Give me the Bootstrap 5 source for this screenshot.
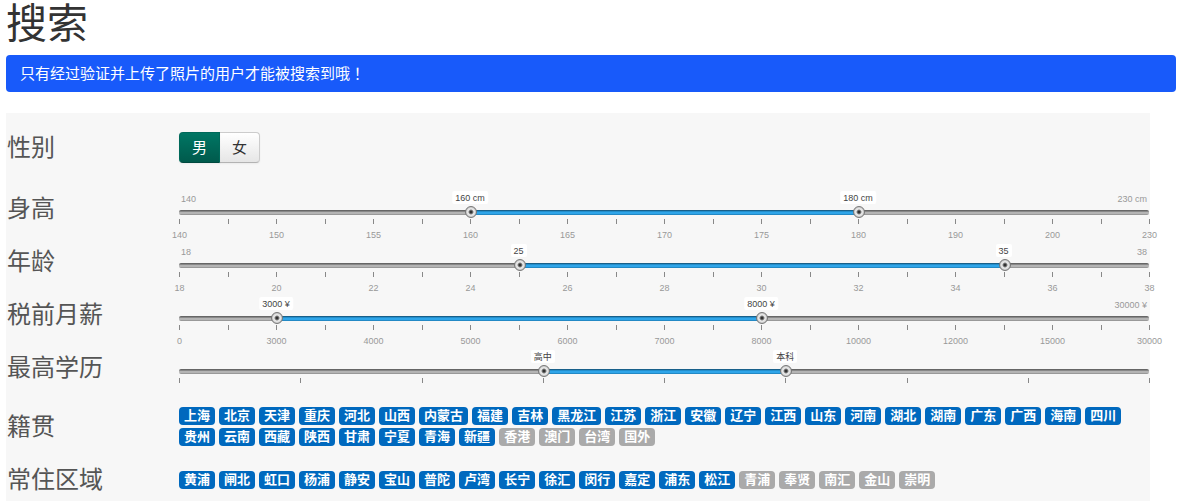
<!DOCTYPE html>
<html lang="zh-CN">
<head>
<meta charset="utf-8">
<meta name="viewport" content="width=device-width, initial-scale=1">
<title>搜索</title>
<link rel="stylesheet" href="https://cdn.jsdelivr.net/npm/bootstrap@5.3.0/dist/css/bootstrap.min.css">
<style>
body { font-family: "Liberation Sans", "Noto Sans CJK SC", sans-serif; font-size: 15px; color: #333; }
.page { padding: 0 7px 0 6px; }
.page-title { font-size: 41px; line-height: 48px; margin-bottom: 7px; }
.notice { background: #185afa; padding: 8px 14px; line-height: 21px; border-radius: 4px; margin-bottom: 21px; }
.notice-end { font-family: "Noto Sans CJK TC", sans-serif; line-height: 1; }
.panel { background: #f7f7f7; margin-right: 26px; padding-top: 17px; }
.filter-name { flex: 0 0 173px; font-size: 24px; line-height: 36px; color: #555; padding-left: 1px; }
.sex-row { margin-bottom: 25px; }
.sex { margin-top: 2px; }
.sex .btn { font-size: 15px; line-height: 21px; padding: 4px 12px; border-radius: 4px; color: #333; border: 1px solid #ccc; border-bottom-color: #b3b3b3; background: linear-gradient(#fff, #e6e6e6); box-shadow: 0 1px 2px rgba(0,0,0,.05); }
.sex .btn-check:checked + .btn { color: #fff; border-color: #00695a #00695a #00493f; background: linear-gradient(#007664, #005a4c); }
.slider { height: 50px; margin: 0 1px 3px 0; font-size: 9px; line-height: 13px; color: #999; }
.limits { height: 19px; padding: 2px 2px 0; }
.rail { height: 5px; border-radius: 2px; background: linear-gradient(#666 1px, #888 1px, #888 2px, #b4b4b4 2px, #b4b4b4 4px, #999 4px); }
.range-fill { height: 5px; background: linear-gradient(#19608a 1px, #238ecb 1px, #238ecb 2px, #2fa5e9 2px, #2fa5e9 4px, #2389c5 4px); }
.bubble { bottom: 11px; transform: translateX(-50%); padding: 1px 3px 0; line-height: 13px; height: 13px; background: #fff; border-radius: 2px; color: #444; white-space: nowrap; }
.knob { -webkit-appearance: none; appearance: none; left: -5px; top: -4px; width: calc(100% + 12px); height: 12px; margin: 0; background: none; pointer-events: none; }
.knob::-webkit-slider-thumb { -webkit-appearance: none; width: 12px; height: 12px; border: 1px solid #777; border-radius: 50%; pointer-events: auto; cursor: pointer; background: radial-gradient(circle, #333 1px, #888 2px, #eee 3px, #ddd 4px, #aaa 6px); }
.scale { margin-top: 4px; }
.tick { top: 0; width: 1px; height: 5px; background: #888; }
.tick span { top: 10px; left: 50%; transform: translateX(-50%); }
.tags { gap: 3px 4px; }
.tag-btn { font-size: 13px; font-weight: 700; line-height: 18px; height: 18px; min-width: 36px; padding: 0 5px; border: 0; border-radius: 4px; background: #aaa; color: #fff; }
.tag-btn[aria-pressed=true] { background: #0069be; }
.origin-row { margin: 4px 0 16px; }
</style>
</head>
<body>
<main class="page d-flex flex-column min-vh-100">
  <h1 class="page-title fw-normal">搜索</h1>
  <div class="notice text-white" role="alert">只有经过验证并上传了照片的用户才能被搜索到哦<span class="notice-end" lang="zh-TW">！</span></div>
  <form class="panel flex-grow-1">
    <div class="sex-row d-flex align-items-start">
      <div class="filter-name" id="n-sex">性别</div>
      <div class="sex btn-group" role="group" aria-labelledby="n-sex">
        <input class="btn-check" type="radio" name="sex" id="male" checked><label class="btn" for="male">男</label>
        <input class="btn-check" type="radio" name="sex" id="female"><label class="btn" for="female">女</label>
      </div>
    </div>
    <div class="d-flex">
      <div class="filter-name">身高</div>
      <div class="slider flex-grow-1" data-name="身高" data-from="30" data-to="70" data-values="160 cm|180 cm" data-limits="140|230 cm" data-steps="20" data-scale="140|150|155|160|165|170|175|180|190|200|230"></div>
    </div>
    <div class="d-flex">
      <div class="filter-name">年龄</div>
      <div class="slider flex-grow-1" data-name="年龄" data-from="35" data-to="85" data-values="25|35" data-limits="18|38" data-steps="20" data-scale="18|20|22|24|26|28|30|32|34|36|38"></div>
    </div>
    <div class="d-flex">
      <div class="filter-name">税前月薪</div>
      <div class="slider flex-grow-1" data-name="税前月薪" data-from="10" data-to="60" data-values="3000 ¥|8000 ¥" data-limits="|30000 ¥" data-steps="20" data-scale="0|3000|4000|5000|6000|7000|8000|10000|12000|15000|30000"></div>
    </div>
    <div class="d-flex">
      <div class="filter-name">最高学历</div>
      <div class="slider flex-grow-1" data-name="最高学历" data-from="37.5" data-to="62.5" data-values="高中|本科" data-limits="|" data-steps="8" data-scale=""></div>
    </div>
    <div class="origin-row d-flex align-items-center">
      <div class="filter-name" id="n-origin">籍贯</div>
      <div class="tags d-flex flex-wrap" role="group" aria-labelledby="n-origin" data-on="上海 北京 天津 重庆 河北 山西 内蒙古 福建 吉林 黑龙江 江苏 浙江 安徽 辽宁 江西 山东 河南 湖北 湖南 广东 广西 海南 四川 贵州 云南 西藏 陕西 甘肃 宁夏 青海 新疆" data-off="香港 澳门 台湾 国外"></div>
    </div>
    <div class="d-flex align-items-center">
      <div class="filter-name" id="n-area">常住区域</div>
      <div class="tags d-flex flex-wrap" role="group" aria-labelledby="n-area" data-on="黄浦 闸北 虹口 杨浦 静安 宝山 普陀 卢湾 长宁 徐汇 闵行 嘉定 浦东 松江" data-off="青浦 奉贤 南汇 金山 崇明"></div>
    </div>
  </form>
</main>
<script src="https://cdn.jsdelivr.net/npm/bootstrap@5.3.0/dist/js/bootstrap.bundle.min.js"></script>
<script>
document.querySelectorAll('.slider').forEach(el => {
  const d = el.dataset, values = d.values.split('|'), limits = d.limits.split('|');
  const scale = d.scale ? d.scale.split('|') : [], steps = +d.steps;
  let ticks = '';
  for (let i = 0; i <= steps; i++) {
    const text = i % 2 === 0 && scale[i / 2] ? `<span class="position-absolute">${scale[i / 2]}</span>` : '';
    ticks += `<div class="tick position-absolute" style="left:${i / steps * 100}%">${text}</div>`;
  }
  const ends = [d.from, d.to].map((p, i) =>
    `<input class="knob position-absolute" type="range" min="0" max="100" step="0.5" value="${p}" aria-label="${d.name}${i ? '上限' : '下限'}" aria-valuetext="${values[i]}">
     <output class="bubble position-absolute" style="left:${p}%">${values[i]}</output>`).join('');
  el.innerHTML = `<div class="limits d-flex justify-content-between"><span>${limits[0]}</span><span>${limits[1]}</span></div>
    <div class="rail position-relative"><div class="range-fill" style="margin-left:${d.from}%;width:${d.to - d.from}%"></div>${ends}</div>
    <div class="scale position-relative">${ticks}</div>`;
});
document.querySelectorAll('.tags').forEach(el => {
  const make = (list, on) => list.split(' ').map(t => `<button type="button" class="tag-btn" aria-pressed="${on}">${t}</button>`).join('');
  el.innerHTML = make(el.dataset.on, true) + make(el.dataset.off, false);
  el.addEventListener('click', e => {
    const b = e.target.closest('button');
    if (b) b.setAttribute('aria-pressed', b.getAttribute('aria-pressed') !== 'true');
  });
});
</script>
</body>
</html>
